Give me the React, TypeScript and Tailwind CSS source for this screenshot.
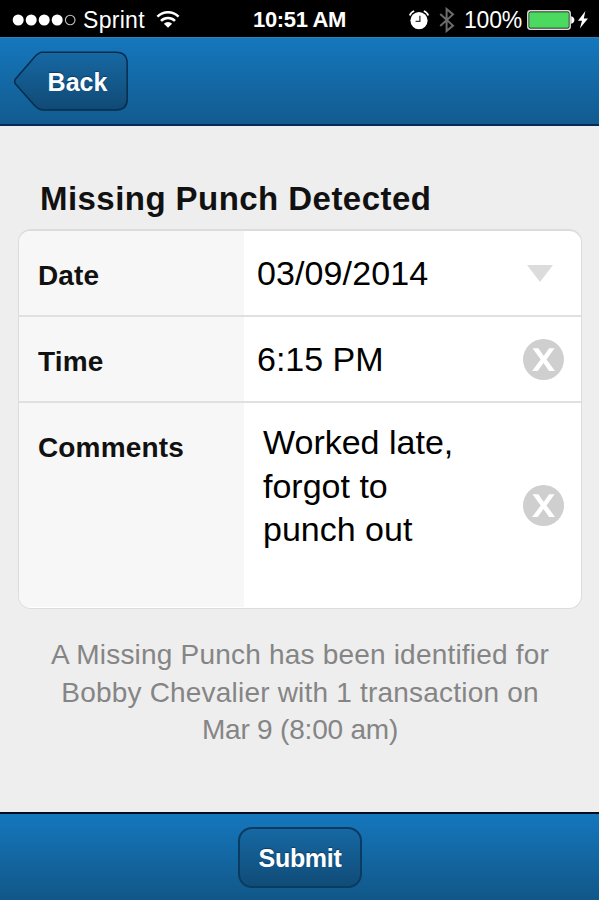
import { useState } from 'react'
import type { ReactNode } from 'react'

function SignalDots() {
  return (
    <svg width="66" height="14" viewBox="0 0 66 14" fill="#fff">
      <circle cx="7.2" cy="7" r="5.5" />
      <circle cx="20.2" cy="7" r="5.5" />
      <circle cx="33.2" cy="7" r="5.5" />
      <circle cx="46.2" cy="7" r="5.5" />
      <circle cx="59.2" cy="7" r="4.8" fill="none" stroke="#c4c4c4" strokeWidth="1.1" />
    </svg>
  )
}

function WifiIcon() {
  return (
    <svg width="24" height="18" viewBox="0 0 24 18" fill="none" stroke="#fff" strokeWidth="2.5">
      <path d="M1.4 6.7a15 15 0 0 1 21.2 0" />
      <path d="M5 10.8a10 10 0 0 1 14 0" />
      <path d="M12 17.8 7.9 13.7a5.8 5.8 0 0 1 8.2 0z" fill="#fff" stroke="none" />
    </svg>
  )
}

function AlarmIcon() {
  return (
    <svg width="20" height="20" viewBox="0 0 20 20" fill="none">
      <circle cx="10" cy="10.6" r="8.6" fill="#fff" />
      <path d="M0.8 5.4Q1.8 2.2 5.2 1M19.2 5.4Q18.2 2.2 14.8 1" stroke="#fff" strokeWidth="1.7" />
      <path d="M10.9 5.8v5.6H6.6" stroke="#333" strokeWidth="1.3" />
    </svg>
  )
}

function BluetoothIcon() {
  return (
    <svg width="16" height="26" viewBox="0 0 16 26" fill="none" stroke="#6c6c6c" strokeWidth="2">
      <path d="M1.2 7 14 18.6 7.6 24V2L14 7.4 1.2 19" />
    </svg>
  )
}

function BatteryIcon() {
  return (
    <svg width="48" height="20" viewBox="0 0 48 20">
      <rect x="0.8" y="0.8" width="42.4" height="18.4" rx="2.6" fill="#000" stroke="#dcdcdc" strokeWidth="1.5" />
      <rect x="2.2" y="2.2" width="39.6" height="15.6" rx="1" fill="#4cd95f" />
      <path d="M44.2 6.2q3.2 1 3.2 3.8t-3.2 3.8z" fill="#fff" />
    </svg>
  )
}

function BoltIcon() {
  return (
    <svg width="10" height="18" viewBox="0 0 10 18" fill="#fff">
      <path d="M7.4 0 0 9.8h4L1.8 17.6 10 7.4H5.8z" />
    </svg>
  )
}

function StatusBar() {
  return (
    <div className="flex h-[37px] items-center bg-black text-white">
      <div className="flex w-[253px] items-center pt-[2px] pl-[11px]">
        <SignalDots />
        <span className="ml-[6px] w-[62px] pt-[1px] text-[23px] leading-none tracking-[0.3px] whitespace-nowrap">Sprint</span>
        <span className="ml-[11px] -mt-[2px]"><WifiIcon /></span>
      </div>
      <div className="w-[94px] pt-[3px] text-[22px] leading-none font-bold tracking-[-0.35px] whitespace-nowrap">10:51 AM</div>
      <div className="flex flex-1 items-center pt-[2px] pl-[62px]">
        <AlarmIcon />
        <span className="ml-[10px]"><BluetoothIcon /></span>
        <span className="ml-[9px] w-[58px] pt-[1px] text-[23px] leading-none tracking-[-0.2px] whitespace-nowrap">100%</span>
        <span className="ml-[5px]"><BatteryIcon /></span>
        <span className="ml-[3px]"><BoltIcon /></span>
      </div>
    </div>
  )
}

function BackButton() {
  return (
    <button type="button" className="relative ml-[14px] h-[60px] w-[115px] pt-[3px] pl-[12px] text-[25px] font-bold text-white [text-shadow:0_-1px_1px_#0b3d66]">
      <svg className="absolute inset-0" width="115" height="60" viewBox="0 0 115 60">
        <defs>
          <linearGradient id="back" x1="0" y1="0" x2="0" y2="1">
            <stop offset="0" stopColor="#1668a3" />
            <stop offset="1" stopColor="#104a75" />
          </linearGradient>
        </defs>
        <path
          d="M28 1.2H102Q113.200 1.2 113.2 12.5V48Q113.2 59 102 59H30Q25 59 21 55L1.5 33Q-0.2 30.5 1.5 28L21 5.5Q25 1.2 28 1.2z"
          fill="url(#back)"
          stroke="#062d4c"
          strokeWidth="1.5"
        />
      </svg>
      <span className="relative">Back</span>
    </button>
  )
}

function Row({ label, children, className }: { label: string; children: ReactNode; className: string }) {
  return (
    <div className={`flex ${className}`}>
      <div className="w-[225px] flex-shrink-0 bg-[#f7f7f7] pt-[29px] pl-[19px] text-[28px] leading-[32px] font-bold tracking-[0.15px] text-[#111]">
        {label}
      </div>
      <div className="flex flex-1 items-center justify-between pr-[17px] text-black">{children}</div>
    </div>
  )
}

function ClearButton({ onClick }: { onClick: () => void }) {
  return (
    <button type="button" aria-label="Clear" onClick={onClick} className="size-[41px]">
      <svg width="41" height="41" viewBox="0 0 41 41">
        <circle cx="20.5" cy="20.5" r="20.5" fill="#cfcfcf" />
        <path d="M9.5 9.3h5.9l5.3 7.7 5.4-7.7h5.5l-8.1 11.1 8.5 11.7h-5.900l-5.600-8.100-5.800 8.100H9.100l8.600-11.600z" fill="#fff" />
      </svg>
    </button>
  )
}

export default function App() {
  const [time, setTime] = useState('6:15 PM')
  const [comments, setComments] = useState(['Worked late,', 'forgot to', 'punch out'])

  return (
    <div className="flex h-[900px] w-[599px] flex-col overflow-hidden bg-[#eee] font-['Liberation_Sans',Arial,sans-serif]">
      <StatusBar />

      {/* Navigation */}
      <header className="flex h-[89px] items-center border-t border-b-2 border-t-[#2b82bd] border-b-[#06295a] bg-linear-to-b from-[#1577bd] to-[#125b8f]">
        <BackButton />
      </header>

      {/* Punch form */}
      <main className="flex-1 pt-[53px] pr-[17px] pl-[18px]">
        <h1 className="mb-[10px] pl-[22px] text-[33px] leading-[40px] font-bold tracking-[0.45px] whitespace-nowrap text-[#111]">
          Missing Punch Detected
        </h1>
        <div className="h-[380px] overflow-hidden rounded-[13px] border-[1.5px] border-t-2 border-[#dcdcdc] bg-white">
          <Row label="Date" className="h-[86px] border-b-2 border-[#e0e0e0]">
            <span className="pl-[13px] text-[34px] tracking-[0.1px]">03/09/2014</span>
            <svg className="mr-[11px]" width="26" height="17" viewBox="0 0 26 17">
              <path d="M0 0h26L13 17z" fill="#dcdcdc" />
            </svg>
          </Row>
          <Row label="Time" className="h-[86px] border-b-2 border-[#e0e0e0]">
            <span className="pl-[13px] text-[34px]">{time}</span>
            <ClearButton onClick={() => setTime('')} />
          </Row>
          <Row label="Comments" className="h-[204px]">
            <div className="self-start pt-[18px] pl-[19px] text-[34px] leading-[43.5px] whitespace-nowrap">
              {comments.map((line) => (
                <div key={line}>{line}</div>
              ))}
            </div>
            <ClearButton onClick={() => setComments([])} />
          </Row>
        </div>
        <p className="mt-[27px] text-center text-[28px] leading-[37.5px] tracking-[0.2px] whitespace-nowrap text-[#858585]">
          A Missing Punch has been identified for
          <br />
          Bobby Chevalier with 1 transaction on
          <br />
          <span className="tracking-[-0.2px]">Mar 9 (8:00 am)</span>
        </p>
      </main>

      <footer className="flex h-[88px] items-center justify-center border-t-2 border-[#030d20] bg-linear-to-b from-[#1577bd] to-[#115788]">
        <button
          type="button"
          className="ml-[1px] h-[61px] w-[124px] rounded-[14px] border-2 border-[#0a3c62] bg-linear-to-b from-[#1668a3] to-[#104c78] pt-[4px] text-[25px] font-bold tracking-[-0.3px] text-white [text-shadow:0_-1px_1px_#0b3d66]"
        >
          Submit
        </button>
      </footer>
    </div>
  )
}
